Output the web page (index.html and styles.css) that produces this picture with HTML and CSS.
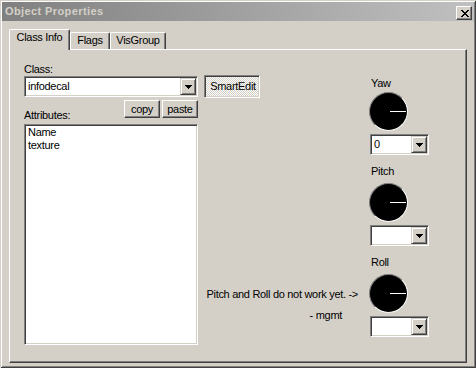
FILE: index.html
```html
<!DOCTYPE html>
<html>
<head>
  <meta charset="UTF-8">
  <link rel="stylesheet" href="styles.css">
</head>
<body>
  <div class="window">
    <div class="titlebar">
      <span class="title">Object Properties</span>
      <button class="close-btn">
        <svg width="8" height="7" viewBox="0 0 8 7"><path d="M0 0h2v1H0z M6 0h2v1H6z M1 1h2v1H1z M5 1h2v1H5z M2 2h4v1H2z M3 3h2v1H3z M2 4h4v1H2z M1 5h2v1H1z M5 5h2v1H5z M0 6h2v1H0z M6 6h2v1H6z" fill="#000"/></svg>
      </button>
    </div>

    <div class="client">
      <div class="tabs">
        <div class="tab active tab-class">Class Info</div>
        <div class="tab tab-flags">Flags</div>
        <div class="tab tab-vis">VisGroup</div>
      </div>

      <div class="panel">
        <div class="col-left">
          <div class="label">Class:</div>
          <div class="combo">
            <span class="combo-text">infodecal</span>
            <span class="combo-btn"><svg width="7" height="4" viewBox="0 0 7 4"><path d="M0 0h7v1H0z M1 1h5v1H1z M2 2h3v1H2z M3 3h1v1H3z" fill="#000"/></svg></span>
          </div>
          <div class="attr-row">
            <div class="label attr-label">Attributes:</div>
            <div class="btn-group">
              <button class="btn">copy</button>
              <button class="btn">paste</button>
            </div>
          </div>
          <div class="listbox">
            <div class="list-item">Name</div>
            <div class="list-item">texture</div>
          </div>
        </div>

        <div class="col-mid">
          <button class="btn smartedit">SmartEdit</button>
          <div class="note">
            <div>Pitch and Roll do not work yet. -&gt;</div>
            <div class="note-sign">- mgmt</div>
          </div>
        </div>

        <div class="col-right">
          <div class="angle">
            <div class="label angle-label">Yaw</div>
            <div class="dial"></div>
            <div class="combo combo-small">
              <span class="combo-text">0</span>
              <span class="combo-btn"><svg width="7" height="4" viewBox="0 0 7 4"><path d="M0 0h7v1H0z M1 1h5v1H1z M2 2h3v1H2z M3 3h1v1H3z" fill="#000"/></svg></span>
            </div>
          </div>
          <div class="angle">
            <div class="label angle-label">Pitch</div>
            <div class="dial"></div>
            <div class="combo combo-small">
              <span class="combo-text"></span>
              <span class="combo-btn"><svg width="7" height="4" viewBox="0 0 7 4"><path d="M0 0h7v1H0z M1 1h5v1H1z M2 2h3v1H2z M3 3h1v1H3z" fill="#000"/></svg></span>
            </div>
          </div>
          <div class="angle">
            <div class="label angle-label">Roll</div>
            <div class="dial"></div>
            <div class="combo combo-small">
              <span class="combo-text"></span>
              <span class="combo-btn"><svg width="7" height="4" viewBox="0 0 7 4"><path d="M0 0h7v1H0z M1 1h5v1H1z M2 2h3v1H2z M3 3h1v1H3z" fill="#000"/></svg></span>
            </div>
          </div>
        </div>
      </div>
    </div>
  </div>
</body>
</html>
```

FILE: styles.css
```css
* {
  margin: 0;
  padding: 0;
  box-sizing: border-box;
}

body {
  background: #d4d0c8;
  font-family: "Liberation Sans", Arial, sans-serif;
  font-size: 11px;
  line-height: 13px;
  letter-spacing: -0.3px;
  color: #000;
}

button {
  font: inherit;
  letter-spacing: inherit;
  color: inherit;
}

.window {
  width: 476px;
  height: 368px;
  padding: 2px;
  background: #d4d0c8;
  box-shadow: inset 1px 1px #d4d0c8, inset -1px -1px #404040, inset 2px 2px #fff, inset -2px -2px #808080;
  display: flex;
  flex-direction: column;
}

/* title bar */
.titlebar {
  height: 19px;
  padding: 0 2px 0 3px;
  background: linear-gradient(to right, #808080, #c0c0c0);
  display: flex;
  align-items: center;
  justify-content: space-between;
}

.title {
  font-weight: bold;
  letter-spacing: 0.4px;
  color: #d4d0c8;
}

.close-btn {
  width: 16px;
  height: 14px;
  align-self: flex-start;
  margin-top: 4px;
  background: #d4d0c8;
  border: 1px solid;
  border-color: #fff #404040 #404040 #fff;
  box-shadow: inset -1px -1px #808080;
  display: flex;
  align-items: center;
  justify-content: center;
  padding-left: 1px;
}

.close-btn svg {
  display: block;
}

/* tabs */
.client {
  flex: 1;
  padding: 8px 7px 3px 7px;
  display: flex;
  flex-direction: column;
}

.tabs {
  height: 20px;
  display: flex;
  align-items: flex-end;
}

.tab {
  height: 17px;
  padding-top: 1px;
  text-align: center;
  background: #d4d0c8;
  border: 1px solid;
  border-bottom: none;
  border-color: #fff #404040 #fff #fff;
  border-radius: 2px 2px 0 0;
  box-shadow: inset -1px 0 #808080;
}

.tab.active {
  height: 21px;
  margin-bottom: -1px;
  position: relative;
  z-index: 1;
}

.tab-class { width: 61px; }
.tab-flags { width: 40px; }
.tab-vis { width: 56px; }

.panel {
  flex: 1;
  display: flex;
  padding: 13px 0 16px 14px;
  border: 1px solid;
  border-color: #fff #404040 #404040 #fff;
  box-shadow: inset -1px -1px #808080;
}

/* left column */
.col-left {
  width: 174px;
  display: flex;
  flex-direction: column;
}

.combo {
  height: 21px;
  padding: 1px;
  background: #fff;
  border: 1px solid;
  border-color: #808080 #fff #fff #808080;
  box-shadow: inset 1px 1px #404040, inset -1px -1px #d4d0c8;
  display: flex;
}

.combo-text {
  flex: 1;
  padding-left: 2px;
  line-height: 17px;
}

.combo-btn {
  width: 16px;
  background: #d4d0c8;
  border: 1px solid;
  border-color: #d4d0c8 #404040 #404040 #d4d0c8;
  box-shadow: inset 1px 1px #fff, inset -1px -1px #808080;
  display: flex;
  align-items: center;
  justify-content: center;
}

.combo-btn svg {
  display: block;
}

.attr-row {
  height: 22px;
  margin-top: 3px;
  display: flex;
  justify-content: space-between;
}

.attr-label {
  align-self: flex-end;
}

.btn-group {
  display: flex;
  gap: 2px;
}

.btn {
  width: 36px;
  height: 18px;
  line-height: 15px;
  background: #d4d0c8;
  border: 1px solid;
  border-color: #fff #404040 #404040 #fff;
  box-shadow: inset -1px -1px #808080;
  text-align: center;
}

.listbox {
  height: 221px;
  margin-top: 2px;
  padding: 1px 3px;
  background: #fff;
  border: 1px solid;
  border-color: #808080 #fff #fff #808080;
  box-shadow: inset 1px 1px #404040, inset -1px -1px #d4d0c8;
}

/* middle column */
.col-mid {
  width: 165px;
  margin-left: 6px;
  display: flex;
  flex-direction: column;
  align-items: flex-start;
}

.btn.smartedit {
  width: 56px;
  height: 23px;
  margin-top: 12px;
  padding-left: 2px;
  border-color: #808080 #fff #fff #808080;
  box-shadow: inset 1px 1px #404040, inset -1px -1px #d4d0c8;
  background-color: #fff;
  background-image: conic-gradient(#d4d0c8 25%, #fff 0 50%, #d4d0c8 0 75%, #fff 0);
  background-size: 2px 2px;
}

.note {
  align-self: stretch;
  margin-top: auto;
  margin-bottom: 24px;
  padding-right: 11px;
  text-align: right;
}

.note-sign {
  margin-top: 8px;
  padding-right: 16px;
}

/* right column */
.col-right {
  width: 61px;
}

.angle {
  margin-top: 10px;
}

.angle:first-child {
  margin-top: 14px;
}

.angle-label {
  padding-left: 2px;
  margin-bottom: 5px;
}

.angle:first-child .angle-label {
  margin-bottom: 2px;
}

.dial {
  width: 39px;
  height: 39px;
  border-radius: 50%;
  background: #000;
  border: 1px solid;
  border-color: #808080 #fff #fff #808080;
  position: relative;
}

.dial::after {
  content: '';
  position: absolute;
  left: 20px;
  top: 18px;
  width: 16px;
  height: 1px;
  background: #fff;
}

.combo-small {
  width: 59px;
  margin-left: 1px;
  margin-top: 3px;
}
```
